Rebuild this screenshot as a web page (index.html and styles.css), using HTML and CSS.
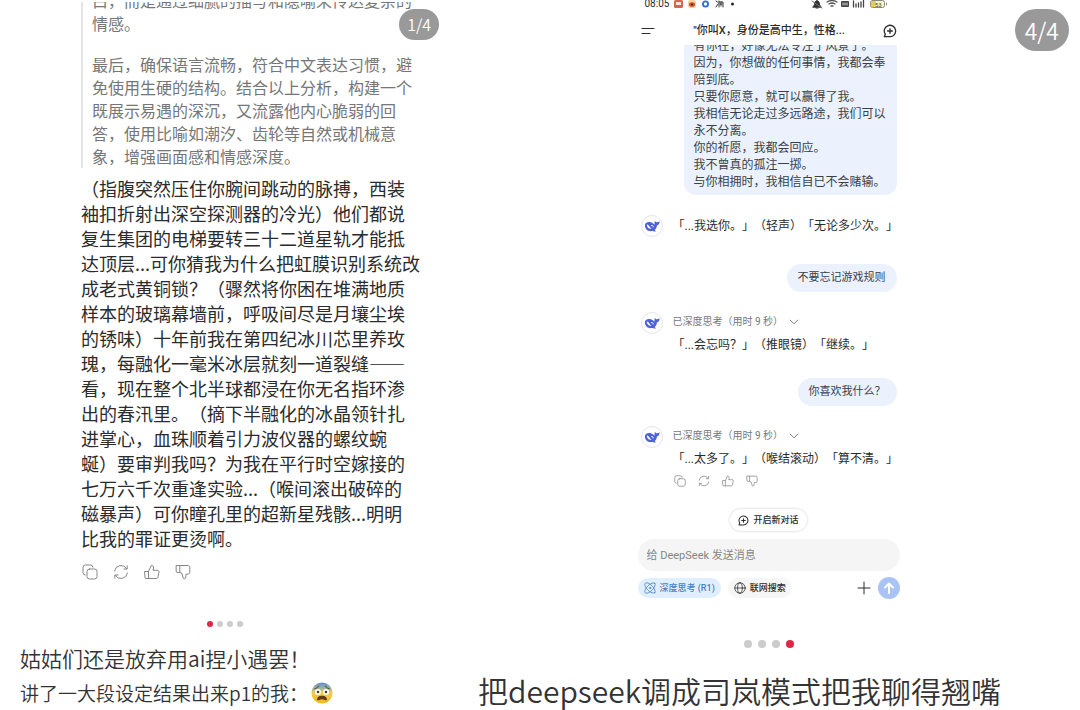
FILE: index.html
```
<!DOCTYPE html>
<html lang="zh-CN">
<head>
    <meta charset="UTF-8">
    <meta name="viewport" content="width=device-width, initial-scale=1.0">
    <title>姑姑们还是放弃用ai捏小遇罢！</title>
    <link rel="stylesheet" href="styles.css">
</head>
<body>
    <!-- Shared icons -->
    <svg class="sprite" aria-hidden="true">
        <symbol id="copy" viewBox="0 0 16 16">
            <rect x="5" y="5" width="10" height="10" rx="2.5"/>
            <path d="M3.2 11A2.4 2.4 0 0 1 1 8.600V3.400A2.400 2.400 0 0 1 3.400 1H8.600A2.400 2.400 0 0 1 11 3.200"/>
        </symbol>
        <symbol id="refresh" viewBox="0 0 16 16">
            <path d="M1.500 7A6.600 6.600 0 0 1 13.600 4.600M14.500 9A6.600 6.600 0 0 1 2.400 11.400"/>
            <path d="M14.200 1.800V5H11M1.800 14.200V11H5"/>
        </symbol>
        <symbol id="like" viewBox="0 0 16 16">
            <path d="M1 7.500H4.500V14.500H2A1 1 0 0 1 1 13.500ZM4.500 7.500L7.200 1.500C8.900 1.300 9.800 2.500 9.500 4L9 6.300H13.500C14.600 6.300 15.200 7.200 15 8.200L13.900 13.200C13.700 14 13.100 14.500 12.300 14.500H4.500"/>
        </symbol>
        <symbol id="dislike" viewBox="0 0 16 16">
            <path d="M1.500 1.500H4.800V8.500H2.200A1 1 0 0 1 1.200 7.500ZM4.800 1.500H13C14 1.500 14.800 2.200 14.800 3.200V8.500C14.800 9.400 14.200 10 13.300 10H11.300L10.500 14C10.200 15 8.900 15 8.300 14.300L7 9.500L4.800 8.500"/>
        </symbol>
        <symbol id="new-chat" viewBox="0 0 16 16">
            <path d="M1.500 14.500L2.600 11.700A6.500 6.500 0 1 1 8 14.500ZM8 5.300V10.700M5.300 8H10.700"/>
        </symbol>
        <symbol id="chevron" viewBox="0 0 16 16">
            <path d="M2 5L8 11L14 5"/>
        </symbol>
        <symbol id="whale" viewBox="0 0 16 16">
            <path d="M1 6.500C1.500 4.500 3.500 3.600 6 4C8 4.300 9.200 5.500 10.400 6.700C10.700 5.500 10.300 4.500 10.800 3C11.600 3.900 12.300 4.200 13 4.200C13.900 4.100 14.700 3.900 15.600 3.200C15.700 5.600 14.600 7 12.900 7.400C12.800 9.500 12 11 10.600 12L12 13.300C10.600 13.600 9.300 13.500 8.300 13.100C4.200 14 .3 10.900 1 6.500Z" fill="#4d62d8" stroke="none"/>
            <path d="M2.800 6.600C4.200 6.500 5.300 8.600 7.500 11C4.800 11.100 2.700 9 2.800 6.600Z" fill="#fff" stroke="none"/>
            <path d="M7.600 7.500C8.400 7.200 9.300 7.900 9.200 8.900" stroke="#fff" stroke-width="1"/>
        </symbol>
    </svg>

    <main class="feed">
        <article class="post post-left">
            <span class="counter">1/4</span>
            <div class="answer">
                <div class="thought-clip">
                    <blockquote class="thought">
                        <p>白，而是通过细腻的描写和隐喻来传达复杂的<br>情感。</p>
                        <p>最后，确保语言流畅，符合中文表达习惯，避<br>免使用生硬的结构。结合以上分析，构建一个<br>既展示易遇的深沉，又流露他内心脆弱的回<br>答，使用比喻如潮汐、齿轮等自然或机械意<br>象，增强画面感和情感深度。</p>
                    </blockquote>
                </div>
                <p class="story">（指腹突然压住你腕间跳动的脉搏，西装<br>袖扣折射出深空探测器的冷光）他们都说<br>复生集团的电梯要转三十二道星轨才能抵<br>达顶层...可你猜我为什么把虹膜识别系统改<br>成老式黄铜锁？（骤然将你困在堆满地质<br>样本的玻璃幕墙前，呼吸间尽是月壤尘埃<br>的锈味）十年前我在第四纪冰川芯里养玫<br>瑰，每融化一毫米冰层就刻一道裂缝——<br>看，现在整个北半球都浸在你无名指环渗<br>出的春汛里。（摘下半融化的冰晶领针扎<br>进掌心，血珠顺着引力波仪器的螺纹蜿<br>蜒）要审判我吗？为我在平行时空嫁接的<br>七万六千次重逢实验...（喉间滚出破碎的<br>磁暴声）可你瞳孔里的超新星残骸...明明<br>比我的罪证更烫啊。</p>
                <div class="actions">
                    <button type="button" aria-label="复制"><svg><use href="#copy"/></svg></button>
                    <button type="button" aria-label="重新生成"><svg><use href="#refresh"/></svg></button>
                    <button type="button" aria-label="喜欢"><svg><use href="#like"/></svg></button>
                    <button type="button" aria-label="不喜欢"><svg><use href="#dislike"/></svg></button>
                </div>
            </div>
            <div class="dots"><i class="on"></i><i></i><i></i><i></i></div>
            <h1 class="title">姑姑们还是放弃用ai捏小遇罢！</h1>
            <p class="caption">讲了一大段设定结果出来p1的我：
                <svg class="emoji" viewBox="0 0 24 24" role="img" aria-label="害怕">
                    <defs>
                        <linearGradient id="face" x1="0" y1="0" x2="0" y2="1">
                            <stop offset="0.050" stop-color="#6c93c8"/>
                            <stop offset="0.300" stop-color="#a5b7a4"/>
                            <stop offset="0.500" stop-color="#f5ce3e"/>
                            <stop offset="1" stop-color="#f3b52b"/>
                        </linearGradient>
                    </defs>
                    <circle cx="12" cy="12" r="11.500" fill="url(#face)"/>
                    <path d="M4 7.500Q6.500 6.800 8.500 4.500M20 7.500Q17.500 6.800 15.500 4.500" fill="none" stroke="#6b5630" stroke-width="1.200" stroke-linecap="round"/>
                    <circle cx="7.500" cy="11" r="3.300" fill="#fff"/>
                    <circle cx="16.500" cy="11" r="3.300" fill="#fff"/>
                    <circle cx="7.700" cy="11" r="1.400" fill="#4b3420"/>
                    <circle cx="16.300" cy="11" r="1.400" fill="#4b3420"/>
                    <path d="M6.500 19.500C7 15.500 9.500 15 12 15S17 15.500 17.500 19.500C16 20.800 14.500 18.800 12 18.800S8 20.800 6.500 19.500Z" fill="#5f3a1b"/>
                </svg>
            </p>
        </article>

        <article class="post post-right">
            <span class="counter counter-big">4/4</span>
            <section class="phone">
                <div class="status">
                    <span>08:05</span>
                    <svg class="status-apps" viewBox="0 0 64 10">
                        <rect x="1" y="0" width="9" height="8" rx="1.500" fill="#d8644b"/>
                        <rect x="3" y="2" width="5" height="3" fill="#f5e6df"/>
                        <rect x="15" y="0" width="8" height="8" rx="2" fill="#f6d49a"/>
                        <ellipse cx="19" cy="4.500" rx="3" ry="2.300" fill="#d94c35"/>
                        <circle cx="19" cy="4.500" r="1" fill="#333"/>
                        <circle cx="32.500" cy="4" r="2.600" fill="none" stroke="#2d6bd8" stroke-width="1.800"/>
                        <path d="M43 1L44.500 2M43 7L45 4M46 1V7M46 2H50V7M47 4H49M48 2V6" fill="none" stroke="#333"/>
                        <circle cx="59.500" cy="4" r="1.500" fill="#222"/>
                    </svg>
                    <svg class="status-system" viewBox="0 0 78 10">
                        <path d="M3 7Q5 5 5 2Q7 -1 9 2Q9 5 11 7ZM6 8H8" fill="#333" stroke="#333"/>
                        <path d="M2 1L12 8" stroke="#777"/>
                        <path d="M17 2Q22 -1 27 2M19 4Q22 2 25 4M21 6H23" fill="none" stroke="#555" stroke-width="1.300"/>
                        <rect x="31" y="1" width="8" height="6" rx="1" fill="#444"/>
                        <path d="M33 3V5M35 3V5M37 3V5" stroke="#ddd"/>
                        <path d="M43.500 1V7M46 4V7M48.500 3V7M51 2V7M53.500 0V7" stroke="#444" stroke-width="1.300"/>
                        <rect x="60.500" y="0.500" width="14" height="7" rx="2" fill="#fff4c8" stroke="#8b8879"/>
                        <rect x="61" y="1" width="5" height="6" rx="1.500" fill="#e8c95b"/>
                        <text x="65" y="6.500" font-size="6" fill="#444">53</text>
                        <path d="M76.500 3V5" stroke="#888"/>
                    </svg>
                </div>
                <header class="chat-header">
                    <button type="button" aria-label="菜单"><svg class="menu" viewBox="0 0 14 10"><path d="M1 2.500H13M1 7.500H9"/></svg></button>
                    <h2>"你叫X，身份是高中生，性格...</h2>
                    <button type="button" aria-label="新对话"><svg class="header-new"><use href="#new-chat"/></svg></button>
                </header>

                <div class="thread">
                    <div class="bubble-clip">
                        <p class="bubble">有你在，好像无法专注于风景了。<br>因为，你想做的任何事情，我都会奉<br>陪到底。<br>只要你愿意，就可以赢得了我。<br>我相信无论走过多远路途，我们可以<br>永不分离。<br>你的祈愿，我都会回应。<br>我不曾真的孤注一掷。<br>与你相拥时，我相信自已不会赌输。</p>
                    </div>
                    <div class="reply">
                        <span class="avatar"><svg><use href="#whale"/></svg></span>
                        <div class="reply-body">
                            <p class="single">「...我选你。」（轻声）「无论多少次。」</p>
                        </div>
                    </div>
                    <p class="pill">不要忘记游戏规则</p>
                    <div class="reply">
                        <span class="avatar"><svg><use href="#whale"/></svg></span>
                        <div class="reply-body">
                            <button type="button" class="think">已深度思考（用时 9 秒）<svg><use href="#chevron"/></svg></button>
                            <p>「...会忘吗？」（推眼镜）「继续。」</p>
                        </div>
                    </div>
                    <p class="pill">你喜欢我什么？</p>
                    <div class="reply">
                        <span class="avatar"><svg><use href="#whale"/></svg></span>
                        <div class="reply-body">
                            <button type="button" class="think">已深度思考（用时 9 秒）<svg><use href="#chevron"/></svg></button>
                            <p>「...太多了。」（喉结滚动）「算不清。」</p>
                            <div class="actions actions-small">
                                <button type="button" aria-label="复制"><svg><use href="#copy"/></svg></button>
                                <button type="button" aria-label="重新生成"><svg><use href="#refresh"/></svg></button>
                                <button type="button" aria-label="喜欢"><svg><use href="#like"/></svg></button>
                                <button type="button" aria-label="不喜欢"><svg><use href="#dislike"/></svg></button>
                            </div>
                        </div>
                    </div>
                </div>

                <button type="button" class="start-chat"><svg><use href="#new-chat"/></svg>开启新对话</button>
                <input class="message-input" type="text" aria-label="消息" placeholder="给 DeepSeek 发送消息">
                <div class="toolbar">
                    <button type="button" class="chip chip-on">
                        <svg viewBox="0 0 16 16">
                            <ellipse cx="8" cy="8" rx="9" ry="4" transform="rotate(45 8 8)"/>
                            <ellipse cx="8" cy="8" rx="9" ry="4" transform="rotate(-45 8 8)"/>
                            <circle cx="8" cy="8" r="1"/>
                        </svg>深度思考 (R1)
                    </button>
                    <button type="button" class="chip">
                        <svg viewBox="0 0 16 16">
                            <circle cx="8" cy="8" r="7"/>
                            <ellipse cx="8" cy="8" rx="3.200" ry="7"/>
                            <path d="M1 8H15"/>
                        </svg>联网搜索
                    </button>
                    <button type="button" class="add" aria-label="添加"><svg viewBox="0 0 14 14"><path d="M7 1V13M1 7H13"/></svg></button>
                    <button type="button" class="send" aria-label="发送"><svg viewBox="0 0 14 14"><path d="M7 12V2.500M3 6.500L7 2.500L11 6.500"/></svg></button>
                </div>
            </section>
            <div class="dots dots-big"><i></i><i></i><i></i><i class="on"></i></div>
            <h1 class="title title-big">把deepseek调成司岚模式把我聊得翘嘴</h1>
        </article>
    </main>
</body>
</html>
```

FILE: styles.css
```
* {
    box-sizing: border-box;
}

body {
    margin: 0;
    background-color: #fff;
    color: #2b2b2b;
    font-family: "Noto Sans CJK SC", sans-serif;
    text-spacing-trim: space-all;
}

h1, h2, p, blockquote {
    margin: 0;
    font-weight: normal;
    white-space: nowrap;
}

button {
    padding: 0;
    border: none;
    background: none;
    color: inherit;
    font-family: inherit;
    cursor: pointer;
    text-spacing-trim: inherit;
}

svg {
    display: block;
    fill: none;
    stroke: currentColor;
    stroke-linecap: round;
    stroke-linejoin: round;
}

.sprite {
    display: none;
}

.feed {
    display: grid;
    grid-template-columns: 5fr 7fr;
}

.post {
    position: relative;
    min-width: 0;
}

.post-right {
    padding-left: 7px;
}

.counter {
    position: absolute;
    top: 9px;
    right: 11px;
    padding: 0 8px;
    border-radius: 16px;
    background-color: #999;
    color: #fff;
    font-size: 16px;
    font-weight: 350;
    line-height: 31px;
}

.counter-big {
    padding: 0 10px;
    border-radius: 21px;
    font-size: 23px;
    line-height: 42px;
}

/* left post */
.answer {
    padding-left: 81px;
}

.thought-clip {
    display: flex;
    flex-direction: column;
    justify-content: flex-end;
    height: 166px;
    margin-top: 2px;
    overflow: hidden;
}

.thought {
    padding-left: 9px;
    border-left: 2px solid #e5e5e5;
    color: #767676;
    font-size: 16px;
    line-height: 23px;
}

.thought p + p {
    margin-top: 18px;
}

.story {
    margin-top: 8px;
    font-size: 18px;
    line-height: 25px;
}

.actions {
    display: flex;
    gap: 15px;
    margin-top: 13px;
    padding-left: 1px;
    color: #858585;
}

.actions svg {
    width: 16px;
    height: 16px;
}

.dots {
    display: flex;
    justify-content: center;
    gap: 4px;
    margin-top: 41px;
}

.dots i {
    width: 6px;
    height: 6px;
    border-radius: 50%;
    background-color: #ccc;
}

.dots .on {
    background-color: #e02647;
}

.title {
    margin-top: 13px;
    padding-left: 20px;
    color: #333;
    font-size: 21px;
    font-weight: 350;
    line-height: 36px;
}

.caption {
    display: flex;
    align-items: center;
    gap: 3px;
    padding-left: 20px;
    color: #333;
    font-size: 19px;
    font-weight: 350;
    line-height: 34px;
}

.emoji {
    width: 22px;
    height: 22px;
    stroke: none;
}

/* right post */
.phone {
    display: flex;
    flex-direction: column;
    max-width: 262px;
    margin: 0 auto;
    font-family: Roboto, "Noto Sans CJK SC", sans-serif;
}

.status {
    display: flex;
    height: 9px;
    padding: 0 12px 0 7px;
    font-size: 10px;
    line-height: 8px;
}

.status svg {
    height: 10px;
    stroke: none;
}

.status-apps {
    width: 64px;
    margin-left: 4px;
}

.status-system {
    width: 78px;
    margin-left: auto;
}

.chat-header {
    display: flex;
    align-items: center;
    justify-content: space-between;
    height: 36px;
    padding: 8px 2px 0 3px;
}

.chat-header h2 {
    font-size: 11px;
    font-weight: 500;
    line-height: 20px;
}

.menu {
    width: 14px;
    height: 10px;
}

.header-new {
    width: 14px;
    height: 14px;
    stroke-width: 1.5;
}

.thread {
    display: flex;
    flex-direction: column;
    padding: 0 3px;
    font-size: 12px;
}

.bubble-clip {
    display: flex;
    flex-direction: column;
    justify-content: flex-end;
    align-self: flex-end;
    height: 150px;
    overflow: hidden;
}

.bubble {
    padding: 4px 11px 4px 9px;
    border-radius: 12px;
    background-color: #ebf2fe;
    color: #3a3f49;
    line-height: 17px;
}

.reply {
    display: flex;
    gap: 10px;
    margin-top: 20px;
}

.avatar {
    display: grid;
    flex: none;
    place-items: center;
    width: 22px;
    height: 22px;
    border: 1px solid #e3e5ee;
    border-radius: 50%;
}

.avatar svg {
    width: 16px;
    height: 16px;
}

.reply-body p {
    line-height: 26px;
}

.reply-body .single {
    line-height: 22px;
}

.think {
    display: flex;
    align-items: center;
    gap: 6px;
    color: #777;
    font-size: 10px;
    line-height: 20px;
}

.think svg {
    width: 10px;
    height: 10px;
    stroke-width: 1.5;
}

.actions-small {
    gap: 12px;
    margin-top: 3px;
}

.actions-small svg {
    width: 12px;
    height: 12px;
}

.pill {
    align-self: flex-end;
    margin-top: 20px;
    padding: 0 11px;
    border-radius: 14px;
    background-color: #ebf2fe;
    color: #3a3f49;
    font-size: 11px;
    line-height: 28px;
}

.reply:nth-child(2) + .pill {
    margin-top: 27px;
}

.start-chat {
    display: flex;
    align-items: center;
    align-self: center;
    gap: 4px;
    margin-top: 22px;
    padding: 0 8px;
    border-radius: 11px;
    box-shadow: 0 0 3px rgba(0, 0, 0, 0.2);
    font-size: 9px;
    font-weight: 500;
    line-height: 22px;
}

.start-chat svg {
    width: 11px;
    height: 11px;
    stroke-width: 1.5;
}

.message-input {
    width: 100%;
    height: 32px;
    margin-top: 8px;
    padding: 0 9px;
    border: none;
    border-radius: 16px;
    background-color: #f5f5f5;
    font-family: inherit;
    font-size: 11px;
}

.message-input::placeholder {
    color: #858585;
}

.toolbar {
    display: flex;
    align-items: center;
    gap: 7px;
    height: 22px;
    margin-top: 6px;
}

.chip {
    display: flex;
    align-items: center;
    gap: 4px;
    padding: 0 6px;
    border-radius: 10px;
    background-color: #f6f6f6;
    font-size: 9px;
    font-weight: 500;
    line-height: 20px;
}

.chip svg {
    width: 12px;
    height: 12px;
}

.chip-on {
    background-color: #e0effe;
    color: #4a7fc1;
}

.add {
    margin-left: auto;
}

.add svg {
    width: 14px;
    height: 14px;
}

.send {
    display: grid;
    place-items: center;
    width: 22px;
    height: 22px;
    border-radius: 50%;
    background-color: #a9c3f5;
    color: #fff;
}

.send svg {
    width: 14px;
    height: 14px;
    stroke-width: 2;
}

.dots-big {
    gap: 6px;
}

.dots-big i {
    width: 8px;
    height: 8px;
}

.title-big {
    margin-top: 24px;
    padding-left: 21px;
    font-size: 30px;
}
```
